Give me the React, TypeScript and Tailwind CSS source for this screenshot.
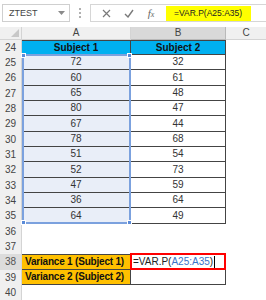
import React from 'react'

type Row = { n: number; a?: string; b?: string; kind?: 'head' | 'data' | 'var' | 'empty' }

const rows: Row[] = [
  { n: 24, a: 'Subject 1', b: 'Subject 2', kind: 'head' },
  { n: 25, a: '72', b: '32', kind: 'data' },
  { n: 26, a: '60', b: '61', kind: 'data' },
  { n: 27, a: '65', b: '48', kind: 'data' },
  { n: 28, a: '80', b: '47', kind: 'data' },
  { n: 29, a: '67', b: '44', kind: 'data' },
  { n: 30, a: '78', b: '68', kind: 'data' },
  { n: 31, a: '51', b: '54', kind: 'data' },
  { n: 32, a: '52', b: '73', kind: 'data' },
  { n: 33, a: '47', b: '59', kind: 'data' },
  { n: 34, a: '36', b: '64', kind: 'data' },
  { n: 35, a: '64', b: '49', kind: 'data' },
  { n: 36, kind: 'empty' },
  { n: 37, kind: 'empty' },
  { n: 38, a: 'Variance 1 (Subject 1)', kind: 'var' },
  { n: 39, a: 'Variance 2 (Subject 2)', kind: 'var' },
  { n: 40, kind: 'empty' },
]

function Handle({ className }: { className: string }) {
  return <div className={`absolute w-[5px] h-[5px] bg-[#5b8bd8] border border-white ${className}`} />
}

export default function App() {
  return (
    <div className="w-[266px] h-[300px] overflow-hidden bg-white font-['Liberation_Sans',Arial,sans-serif] text-[#333] relative">
      {/* formula bar */}
      <div className="flex items-start h-[27px] pt-[4px]">
        <div className="ml-[2px] w-[68px] h-[18px] border border-[#cfcfcf] flex items-center justify-between pl-[6px] pr-[4px]">
          <span className="text-[9px] text-[#444] leading-none">ZTEST</span>
          <svg width="7" height="4" viewBox="0 0 7 4"><path d="M0 0h7L3.5 4z" fill="#8a8a8a" /></svg>
        </div>
        <div className="w-[20px] h-[18px] flex flex-col items-center justify-center gap-[2px]">
          <span className="w-[2px] h-[2px] bg-[#b0b0b0]" />
          <span className="w-[2px] h-[2px] bg-[#b0b0b0]" />
          <span className="w-[2px] h-[2px] bg-[#b0b0b0]" />
        </div>
        <div className="flex-1 h-[18px] border border-r-0 border-[#d6d6d6] flex items-center">
          <div className="w-[72px] flex items-center justify-around pl-[4px] pr-[2px]">
            <svg width="9" height="9" viewBox="0 0 9 9"><path d="M1 1l7 7M8 1L1 8" stroke="#7a7a7a" strokeWidth="1.2" /></svg>
            <svg width="10" height="9" viewBox="0 0 10 9"><path d="M1 5l3 3 5-7" stroke="#7a7a7a" strokeWidth="1.4" fill="none" /></svg>
            <span className="font-['Liberation_Serif',serif] italic text-[11px] text-[#666] leading-none">f<span className="text-[8px]">x</span></span>
          </div>
          <div className="ml-[3px] h-full flex items-center">
            <div className="bg-[#ffff00] h-[15px] w-[85px] flex items-center pl-[8px]">
              <span className="text-[8.5px] text-[#222] leading-none">=VAR.P(A25:A35)</span>
            </div>
          </div>
        </div>
      </div>

      {/* column headers */}
      <div className="flex h-[13px] text-[10px] text-[#444] leading-none">
        <div className="w-[22px] bg-[#f0f0f0] border-r border-b border-[#d4d4d4] relative">
          <svg className="absolute right-[2px] bottom-[2px]" width="8" height="8" viewBox="0 0 8 8"><path d="M8 0v8H0z" fill="#c8c8c8" /></svg>
        </div>
        <div className="w-[109px] bg-[#f0f0f0] border-r border-b border-[#d4d4d4] flex items-center justify-center">A</div>
        <div className="w-[95px] bg-[#d9d9d9] border-r border-b border-[#b9b9b9] flex items-center justify-center">B</div>
        <div className="flex-1 bg-[#f0f0f0] border-b border-[#d4d4d4] flex items-center justify-center">C</div>
      </div>

      {/* grid */}
      <div className="relative">
        {rows.map((r, i) => {
          const tall = i % 3 === 2
          const top = r.kind === 'head' || r.n === 38
          const bordered = r.kind !== 'empty'
          return (
            <div key={r.n} className={`flex text-[10px] leading-none ${tall ? 'h-[16px]' : 'h-[15px]'}`}>
              <div className={`w-[22px] flex items-center justify-center border-r border-[#d4d4d4] ${r.n === 38 ? 'bg-[#dcdcdc] text-[#555]' : 'bg-[#f0f0f0] text-[#444]'}`}>{r.n}</div>
              <div
                className={`w-[109px] flex items-center ${bordered ? 'border-r border-b border-[#444]' : ''} ${top ? 'border-t' : ''} ${
                  r.kind === 'head' ? 'bg-[#00b0f0] font-bold justify-center text-[#111]' :
                  r.kind === 'data' ? 'bg-[#e9eef8] justify-center' :
                  r.kind === 'var' ? 'bg-[#ffc000] font-bold pl-[3px] text-[#111] tracking-[-0.2px]' : ''
                }`}
              >
                {r.a}
              </div>
              <div
                className={`w-[95px] flex items-center relative ${bordered ? 'border-r border-b border-[#444]' : ''} ${top ? 'border-t' : ''} ${
                  r.kind === 'head' ? 'bg-[#00b0f0] font-bold justify-center text-[#111]' : 'justify-center'
                }`}
              >
                {r.n === 38 ? (
                  <>
                    <div className="absolute -inset-[1px] -top-[2px] border-2 border-[#ff0000]" />
                    <div className="absolute left-[2px] top-0 bottom-0 flex items-center text-[#222]">
                      =VAR.P(<span className="text-[#3b73c9]">A25:A35</span>)
                      <span className="w-px h-[12px] bg-black ml-[1px]" />
                    </div>
                  </>
                ) : r.b}
              </div>
              <div className="flex-1" />
            </div>
          )
        })}

        {/* range highlight A25:A35 */}
        <div className="absolute left-[22px] top-[14px] w-[109px] h-[170px] border-2 border-[#7ba1de] pointer-events-none">
          <Handle className="-left-[3px] -top-[3px]" />
          <Handle className="-right-[3px] -top-[3px]" />
          <Handle className="-left-[3px] -bottom-[3px]" />
          <Handle className="-right-[3px] -bottom-[3px]" />
        </div>
      </div>
    </div>
  )
}
